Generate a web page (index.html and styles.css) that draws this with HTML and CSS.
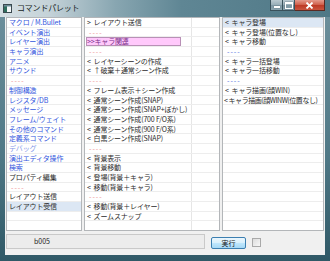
FILE: index.html
```html
<!DOCTYPE html>
<html lang="ja">
<head>
    <meta charset="UTF-8">
    <title>コマンドパレット</title>
    <link rel="stylesheet" href="styles.css">
</head>
<body>

<div class="window">
    <div class="titlebar">
        <svg class="app-icon" width="9" height="9" viewBox="0 0 9 9">
            <rect x="0.5" y="0.5" width="8" height="8" fill="#f4f7f8" stroke="#3b4a50"/>
            <rect x="1" y="1" width="3" height="7" fill="#2f6d5c"/>
            <rect x="1" y="1" width="7" height="1.5" fill="#6d8c96"/>
        </svg>
        <span class="title">コマンドパレット</span>
        <div class="caption-buttons">
            <div class="cap-btn min"><span class="min-bar"></span></div>
            <div class="cap-btn max"><span class="max-box"></span></div>
            <div class="cap-btn close">
                <svg width="9" height="7" viewBox="0 0 9 7">
                    <path d="M1.5 0.5 L7.5 6.5 M7.5 0.5 L1.5 6.5" stroke="#fff" stroke-width="1.8"/>
                </svg>
            </div>
        </div>
    </div>

    <div class="client">
        <div class="lists">
            <ul class="list list-left">
                <li>マクロ / M.Bullet</li>
                <li>イベント演出</li>
                <li>レイヤー演出</li>
                <li>キャラ演出</li>
                <li>アニメ</li>
                <li>サウンド</li>
                <li class="sep">----</li>
                <li>制御構造</li>
                <li>レジスタ/DB</li>
                <li>メッセージ</li>
                <li>フレーム/ウェイト</li>
                <li>その他のコマンド</li>
                <li>定義系コマンド</li>
                <li class="faint">デバッグ</li>
                <li>演出エディタ操作</li>
                <li>検索</li>
                <li class="plain">プロパティ編集</li>
                <li class="sep">----</li>
                <li class="plain">レイアウト送信</li>
                <li class="plain selected">レイアウト受信</li>
                <li></li>
                <li></li>
                <li></li>
            </ul>

            <ul class="list list-middle">
                <li>&gt;&nbsp; レイアウト送信</li>
                <li class="sep">----</li>
                <li><span class="marked">&gt;&gt;キャラ関連</span></li>
                <li class="sep">----</li>
                <li>&lt;&nbsp; レイヤーシーンの作成</li>
                <li>&lt;&nbsp; ↑破棄＋通常シーン作成</li>
                <li class="sep">----</li>
                <li>&lt;&nbsp; フレーム表示＋シーン作成</li>
                <li>&lt;&nbsp; 通常シーン作成(SNAP)</li>
                <li>&lt;&nbsp; 通常シーン作成(SNAP+ぼかし)</li>
                <li>&lt;&nbsp; 通常シーン作成(700 F/O系)</li>
                <li>&lt;&nbsp; 通常シーン作成(900 F/O系)</li>
                <li>&lt;&nbsp; 白黒シーン作成(SNAP)</li>
                <li class="sep">----</li>
                <li>&lt;&nbsp; 背景表示</li>
                <li>&lt;&nbsp; 背景移動</li>
                <li>&lt;&nbsp; 登場(背景＋キャラ)</li>
                <li>&lt;&nbsp; 移動(背景＋キャラ)</li>
                <li class="sep">----</li>
                <li>&lt;&nbsp; 移動(背景＋レイヤー)</li>
                <li>&lt;&nbsp; ズームスナップ</li>
                <li></li>
                <li></li>
            </ul>

            <ul class="list list-right">
                <li class="selected">&lt;&nbsp; キャラ登場</li>
                <li>&lt;&nbsp; キャラ登場(位置なし)</li>
                <li>&lt;&nbsp; キャラ移動</li>
                <li class="sep">----</li>
                <li>&lt;&nbsp; キャラ一括登場</li>
                <li>&lt;&nbsp; キャラ一括移動</li>
                <li class="sep">----</li>
                <li>&lt;&nbsp; キャラ描画(顔WIN)</li>
                <li class="long">&lt; キャラ描画(顔WINW(位置なし)</li>
                <li></li>
                <li></li>
                <li></li>
                <li></li>
                <li></li>
                <li></li>
                <li></li>
                <li></li>
                <li></li>
                <li></li>
                <li></li>
                <li></li>
                <li></li>
                <li></li>
            </ul>
        </div>

        <div class="footer">
            <div class="status">b005</div>
            <button class="run-btn">実行</button>
            <span class="check"></span>
        </div>
    </div>
</div>

</body>
</html>
```

FILE: styles.css
```css
body {
    margin: 0;
    font-family: "Noto Sans CJK JP", "Liberation Sans", sans-serif;
    background: #fff;
}
.window {
    width: 330px;
    height: 261px;
    background: linear-gradient(to bottom, #6f919d 0%, #4f7886 60%, #2f5866 100%);
    display: flex;
    flex-direction: column;
}
.titlebar {
    height: 17px;
    display: flex;
    align-items: flex-start;
    background: linear-gradient(to right, #d6e0e4 0%, #c4d2d8 15%, #88a6b1 35%, #5f8694 55%, #4f7886 100%);
}
.app-icon {
    margin: 4px 0 0 3px;
}
.title {
    margin: 3px 0 0 5px;
    font-size: 8px;
    line-height: 10px;
    color: #161f23;
    letter-spacing: -0.2px;
}
.caption-buttons {
    margin-left: auto;
    margin-right: 5px;
    display: flex;
}
.cap-btn {
    height: 11px;
    box-sizing: border-box;
    border: 1px solid #39515b;
    border-top: none;
    display: flex;
    align-items: center;
    justify-content: center;
}
.min, .max {
    width: 13px;
    background: linear-gradient(to bottom, #bac9d0 0%, #98aeb8 50%, #7f98a4 51%, #8aa3ae 100%);
}
.max {
    width: 12px;
    border-left: none;
}
.min-bar {
    width: 6px;
    height: 2px;
    margin-top: 4px;
    background: #fff;
    box-shadow: 0 0 1px #2d3f46;
}
.max-box {
    width: 6px;
    height: 4px;
    border: 1px solid #fff;
    border-top-width: 2px;
    box-shadow: 0 0 1px #2d3f46;
}
.close {
    width: 30px;
    border-left: none;
    background: linear-gradient(to bottom, #e49a8c 0%, #d0624e 45%, #bd3a26 55%, #c9553f 100%);
    border-color: #5a2a22;
}
.client {
    margin: 0 5px;
    height: 238px;
    background: #f0f0f0;
    display: flex;
    flex-direction: column;
}
.lists {
    height: 214px;
    display: flex;
    gap: 2px;
    padding: 0 1px;
}
.list {
    margin: 0;
    padding: 0;
    list-style: none;
    background: #fff;
    border: 1px solid #b3b6b9;
    overflow: hidden;
    font-size: 7px;
    color: #2b2b2b;
    letter-spacing: -0.15px;
}
.list li {
    box-sizing: border-box;
    height: 9.7px;
    line-height: 9px;
    padding-left: 2px;
    border-bottom: 1px solid #ededed;
    white-space: nowrap;
}
.list-left {
    width: 74px;
    color: #3356dd;
}
.list-left li.plain {
    color: #2b2b2b;
}
.list-left li.faint {
    color: #8598e8;
}
.list-middle {
    width: 134px;
    background: linear-gradient(to right, #fff 106px, #e6e6e6 106px, #e6e6e6 107px, #fff 107px);
}
.list-right {
    flex: 1;
}
.list-right li.long {
    letter-spacing: -0.45px;
    padding-left: 1px;
}
.list li.selected {
    background: #dce7f4;
}
.list li.sep {
    color: #ee8f8f;
    letter-spacing: 1px;
    padding-left: 4px;
}
.list-right li.sep {
    color: #4b6be0;
}
.marked {
    display: block;
    width: 95px;
    margin-left: -1px;
    height: 9px;
    background: #ffc9fb;
    border: 1px solid #b890b6;
    box-sizing: border-box;
    line-height: 7px;
    color: #7a2f8a;
}
.footer {
    flex: 1;
    display: flex;
    align-items: flex-start;
}
.status {
    width: 199px;
    height: 15px;
    margin: 3px 0 0 1px;
    box-sizing: border-box;
    border: 1px solid #c9c9c9;
    background: #ececec;
    font-size: 7px;
    line-height: 13px;
    padding-left: 27px;
    color: #222;
}
.run-btn {
    width: 35px;
    height: 12px;
    margin: 6px 0 0 6px;
    padding: 0;
    border: 1px solid #3c7fb1;
    border-radius: 2px;
    background: linear-gradient(to bottom, #eaf6fd 0%, #d9f0fc 50%, #bee6fd 51%, #a7d9f5 100%);
    font-family: "Noto Sans CJK JP", sans-serif;
    font-size: 7px;
    line-height: 10px;
    color: #111;
}
.check {
    width: 9px;
    height: 9px;
    margin: 7px 0 0 6px;
    box-sizing: border-box;
    border: 1px solid #a9a9a9;
    background: linear-gradient(to bottom right, #dcdcdc, #f7f7f7);
}
```
